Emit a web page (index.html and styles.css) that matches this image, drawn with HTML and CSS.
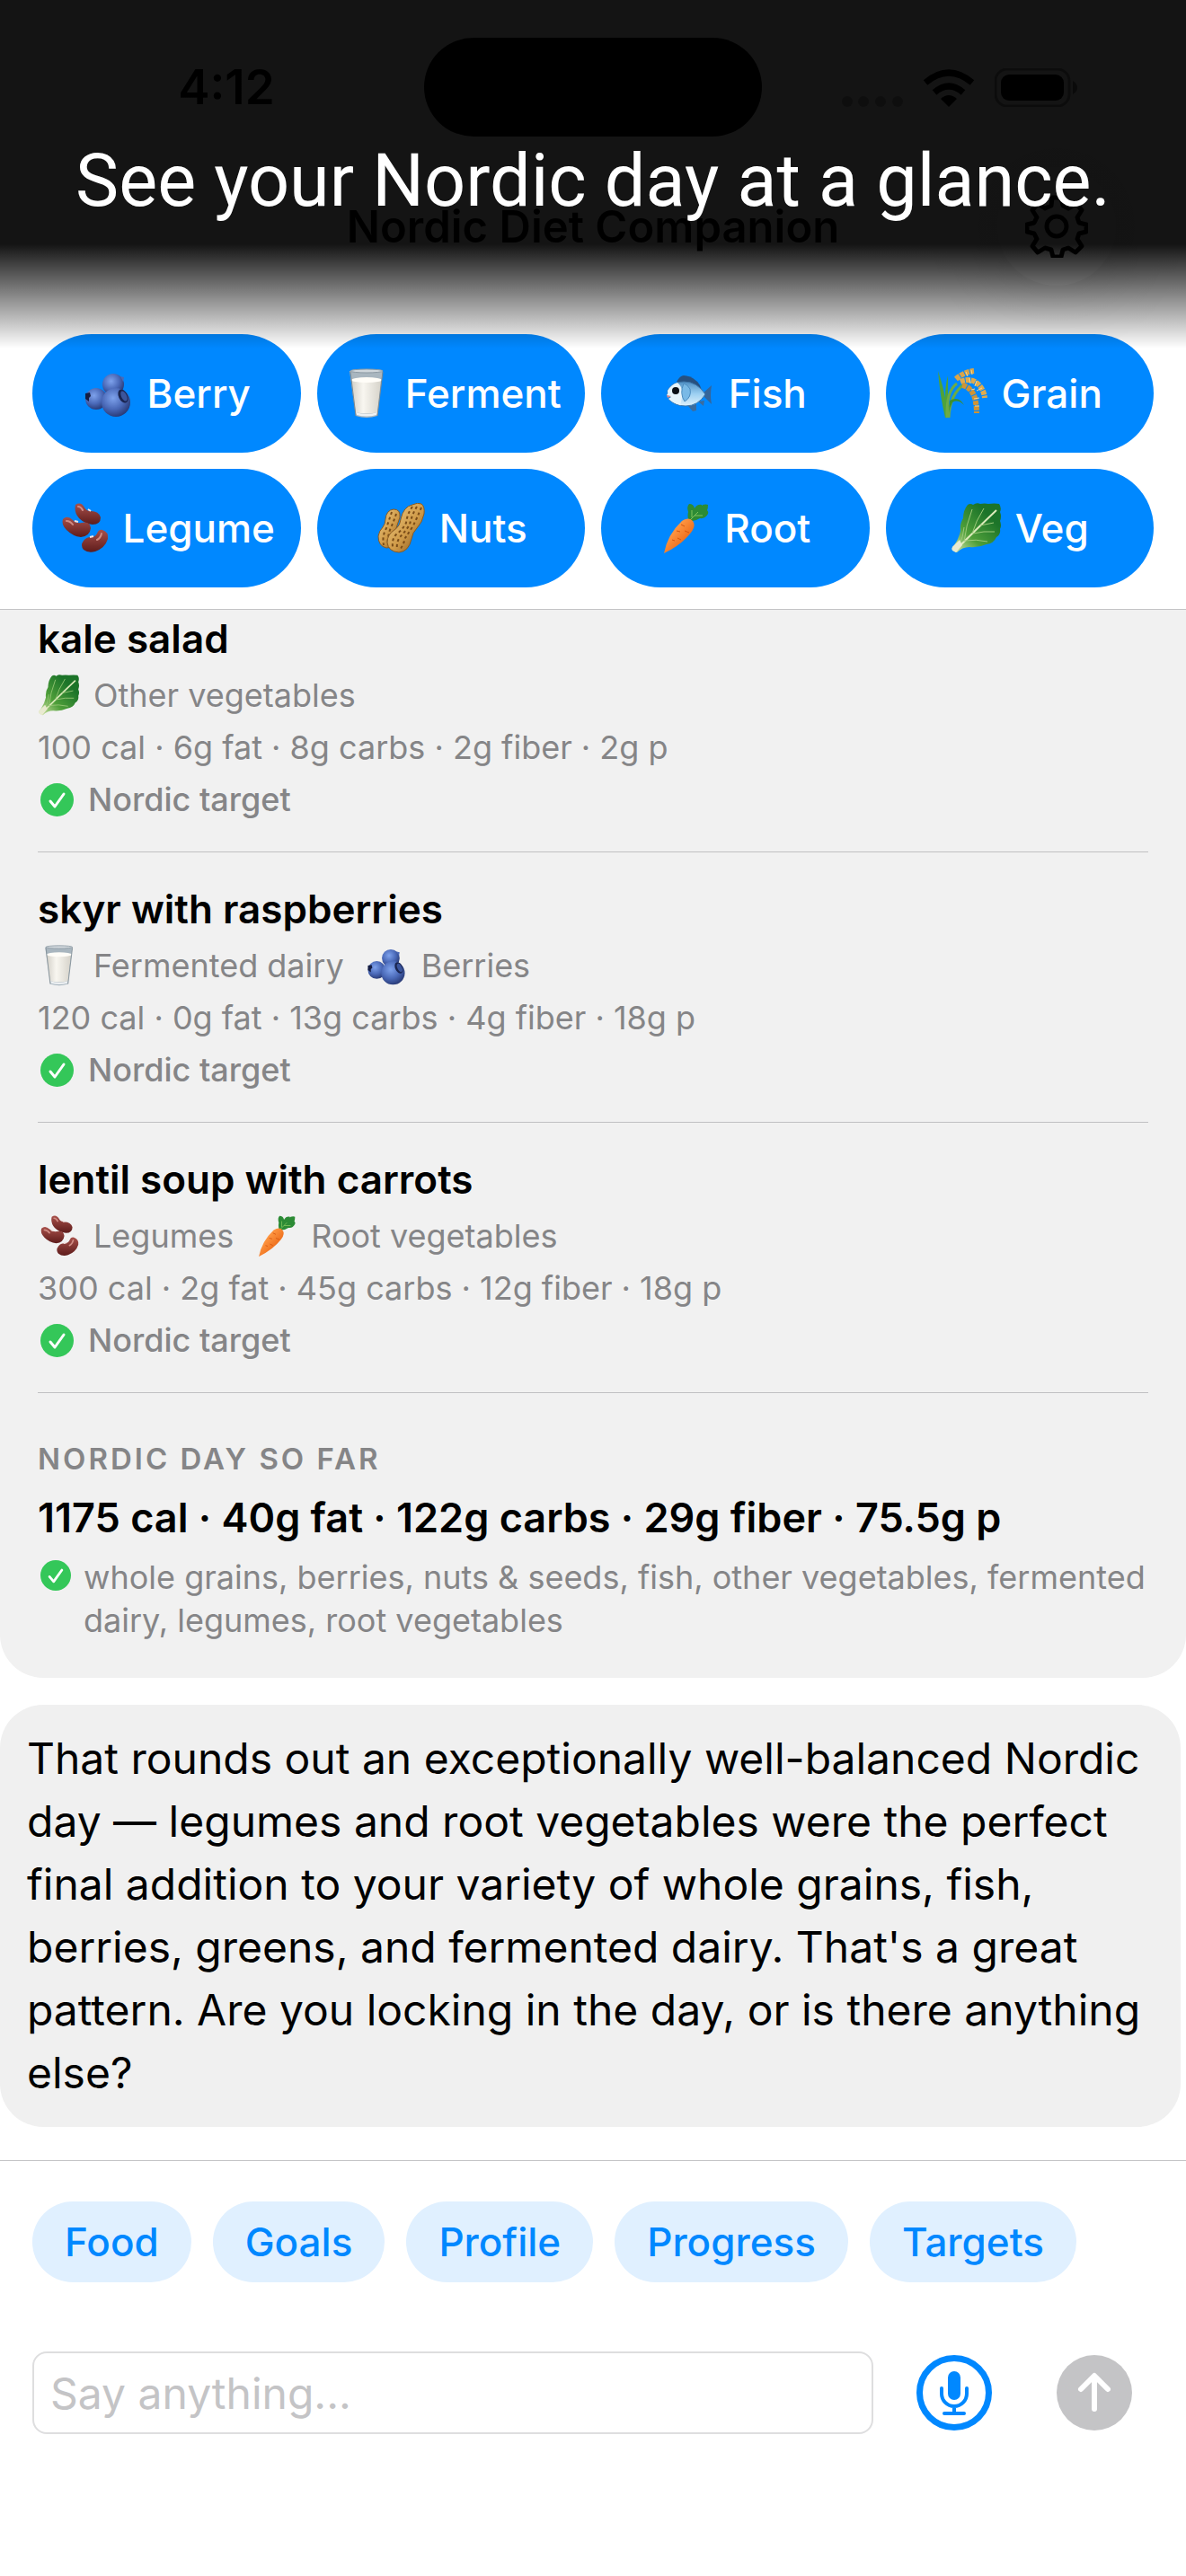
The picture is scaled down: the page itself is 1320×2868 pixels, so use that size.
FILE: index.html
```html
<!DOCTYPE html>
<html lang="en">
<head>
  <meta charset="UTF-8">
  <meta name="viewport" content="width=device-width, initial-scale=1.0">
  <title>Nordic Diet Companion</title>
  <link rel="stylesheet" href="styles.css">
</head>
<body>
  <!-- Shared icons -->
  <svg class="sprite" aria-hidden="true">
    <defs>
      <radialGradient id="berry-fill" cx="0.4" cy="0.35" r="0.7">
        <stop offset="0" stop-color="#7ea2ec"/>
        <stop offset="0.55" stop-color="#4a69b8"/>
        <stop offset="1" stop-color="#25356f"/>
      </radialGradient>
      <linearGradient id="milk-fill" x1="0" x2="1" y1="0" y2="0">
        <stop offset="0" stop-color="#d3d0c8"/>
        <stop offset="0.4" stop-color="#f8f6f0"/>
        <stop offset="1" stop-color="#d6d3ca"/>
      </linearGradient>
      <linearGradient id="bean-fill" x1="0" x2="0" y1="0" y2="1">
        <stop offset="0" stop-color="#a8504a"/>
        <stop offset="1" stop-color="#5e1c1b"/>
      </linearGradient>
      <linearGradient id="nut-fill" x1="0" x2="1" y1="0" y2="1">
        <stop offset="0" stop-color="#f0cf8a"/>
        <stop offset="0.55" stop-color="#cf9a48"/>
        <stop offset="1" stop-color="#7d4f1a"/>
      </linearGradient>
      <linearGradient id="carrot-fill" x1="0" x2="1" y1="0" y2="1">
        <stop offset="0.3" stop-color="#ff9a45"/>
        <stop offset="0.8" stop-color="#e8600f"/>
      </linearGradient>
      <linearGradient id="leaf-fill" x1="0" x2="1" y1="1" y2="0">
        <stop offset="0.05" stop-color="#c9dfa0"/>
        <stop offset="0.35" stop-color="#4f9f3a"/>
        <stop offset="0.75" stop-color="#1c7429"/>
      </linearGradient>
      <linearGradient id="fish-fill" x1="0" x2="0" y1="0" y2="1">
        <stop offset="0" stop-color="#4f8fc4"/>
        <stop offset="0.5" stop-color="#9cd0f2"/>
        <stop offset="1" stop-color="#dff1fb"/>
      </linearGradient>

      <symbol id="berry" viewBox="0 0 56 56">
        <circle cx="34" cy="18" r="12" fill="url(#berry-fill)"/>
        <path d="M42 9l4 1-1 5z" fill="#4a69b8"/>
        <circle cx="15" cy="34" r="12" fill="url(#berry-fill)"/>
        <path d="M3 28l5-1 1 4-2 2 0 4-4-3z" fill="#141c42"/>
        <circle cx="37" cy="38" r="16" fill="url(#berry-fill)"/>
        <ellipse cx="45" cy="31" rx="5" ry="8" transform="rotate(-25 45 31)" fill="#1a2550"/>
        <ellipse cx="46" cy="31" rx="3" ry="6" transform="rotate(-25 46 31)" fill="#3b559c"/>
      </symbol>

      <symbol id="milk" viewBox="0 0 56 56">
        <path d="M10 3h37l-6 50q-12 4-24 0z" fill="#a9b6bf"/>
        <path d="M12 13h33l-4 36q-12 3-24 0z" fill="url(#milk-fill)"/>
        <ellipse cx="29" cy="13" rx="17" ry="3" fill="#fffdf8"/>
        <path d="M17 49q12 4 24 0l-1 3q-11 3-22 0z" fill="#eef1f3"/>
        <ellipse cx="29" cy="3" rx="18" ry="2" fill="#cfd6db" stroke="#8c9aa4"/>
        <path d="M11 4l6 49M47 4l-6 49" stroke="#7d8a92" fill="none"/>
      </symbol>

      <symbol id="fish" viewBox="0 0 56 56">
        <path d="M14 15Q18 8 22 8q12 1 18 11l3 9z" fill="#27507f"/>
        <path d="M42 29l11-10q-2 11 0 21z" fill="#35659a"/>
        <path d="M27 42l5 6 4-1 0-7zM38 37l6 5 1-6z" fill="#3b6c9e"/>
        <path d="M3 30q2-2 1-5 5-10 18-10 15 0 24 14-8 13-22 13-12 0-19-8l3-2z" fill="url(#fish-fill)" stroke="#3f78aa"/>
        <path d="M4 25q4-7 11-9 9 7 3 25-8-2-13-7l3-2-5-2q2-2 1-5z" fill="#e5f3fb"/>
        <path d="M22 17q-5 11 1 20 8-5 6-14-3-5-7-6z" fill="#79b9e6" stroke="#4b8cc0"/>
        <circle cx="13" cy="25" r="4" fill="#0b0f16"/>
        <path d="M3 30l5 1-4 2z" fill="#d88"/>
      </symbol>

      <symbol id="grain" viewBox="0 0 56 56">
        <path d="M9 55Q3 30 1 3q6 18 8 30 0-14 3-25 0 16 0 26l2 21z" fill="#4ea23a"/>
        <path d="M11 55q-1-30 11-38M13 55q1-26 17-37" fill="none" stroke="#6cab45" stroke-width="3"/>
        <path d="M14 36q10-6 16 5-7-7-13-3-3 5-4 12z" fill="#3c8f32"/>
        <path d="M21 12q9-8 20-9" fill="none" stroke="#d9a548" stroke-width="6" stroke-dasharray="5 1"/>
        <path d="M26 15q12-5 20 3 6 6 7 15" fill="none" stroke="#e0ab4c" stroke-width="6" stroke-dasharray="5 1"/>
        <path d="M28 19q10 2 14 14 2 8 2 17" fill="none" stroke="#cf9436" stroke-width="6" stroke-dasharray="5 1"/>
        <path d="M32 4l2 5M38 2l1 5M36 11l1 6M44 14l-2 6M50 22l-6 3M38 24l4-1M41 34l6-1M42 42l5 0" stroke="#f6d692" fill="none"/>
      </symbol>

      <symbol id="bean" viewBox="0 0 56 56">
        <path d="M19 2q6-4 10 3 2 4 7 4 9 0 11 7 0 8-9 8-9-1-15-7-6-7-4-15z" fill="url(#bean-fill)"/>
        <path d="M5 18q5-5 11 1 4 4 10 3 9-2 10 6-1 9-11 10-9-1-16-8-6-6-4-12z" fill="url(#bean-fill)"/>
        <path d="M49 30q7 2 6 10-3 10-14 14-8 2-13-2-4-5 0-10 3-4 8-4 5 0 7-4 2-5 6-4z" fill="url(#bean-fill)"/>
        <path d="M22 4q3 0 5 4M9 20q4 0 7 4M48 34q-1 5-5 7" fill="none" stroke="#d08c84" stroke-width="2" stroke-linecap="round"/>
        <path d="M33 7l3 2M18 20l4 1M35 38l4-1" stroke="#f3e3df" stroke-width="2"/>
      </symbol>

      <symbol id="nuts" viewBox="0 0 56 56">
        <path d="M21 7q8 0 7 9-2 6-4 12-2 6-1 13-1 9-10 9-9-2-9-13 1-6 5-10 3-4 3-9 1-10 9-11z" fill="url(#nut-fill)" stroke="#8a5a20"/>
        <path d="M19 10q-3 9-6 18-5 9-3 19M24 12q-3 9-7 18-3 9-2 17" fill="none" stroke="#7a4c18" stroke-width="2" stroke-dasharray="3 3"/>
        <path d="M52 1q4 3 3 11-2 10-8 16-5 5-6 12-3 14-14 15-12-1-13-11 0-9 8-14 6-4 7-12 3-14 13-16 6-3 10-1z" fill="url(#nut-fill)" stroke="#8a5a20"/>
        <path d="M42 4q-6 9-7 18-4 8-11 13-5 5-4 14M47 4q-6 10-8 20-5 8-11 14-4 6-3 14M52 5q-5 12-9 20-5 8-9 14-2 8-6 13" fill="none" stroke="#7a4c18" stroke-width="2" stroke-dasharray="3 3"/>
      </symbol>

      <symbol id="carrot" viewBox="0 0 56 56">
        <path d="M32 19q-1-6 0-9-2-6 1-9 5 0 6 5 3-5 8-4 0 2 1 0 4-1 6 0 0 4-1 6 2 2 1 4-3 6-9 5-6 4-12 3z" fill="#2c8b35"/>
        <path d="M34 19l9-9M36 16l0-8M39 14l9 0" stroke="#7fc35c" fill="none"/>
        <path d="M25 20q8-5 12 0 4 5-2 13Q24 47 5 56q4-21 20-36z" fill="url(#carrot-fill)"/>
        <path d="M24 24l4 2M19 31l4 1M33 33l-5-2M24 41l-4-2M14 41l3 1" stroke="#d5550e" fill="none"/>
      </symbol>

      <symbol id="leaf" viewBox="0 0 56 56">
        <path d="M3 53q-3-3 1-6 5-7 7-16-1-8 3-14 0-9 5-15 3-2 6 0 4-3 8-1 5-1 9 0 7-1 12 0 3 4 1 9 2 5 0 10 2 5 0 9 1 6-4 9-3 7-11 8-9 4-19 3-8 0-14 6-2 0-4-2z" fill="url(#leaf-fill)"/>
        <path d="M5 53Q30 28 51 8" fill="none" stroke="#dcebbb" stroke-width="2"/>
        <path d="M15 43q2-18 9-36M24 34q4-14 13-28M33 25l15-3M25 34q12-3 24-2M16 42q12-2 25 1M10 46q4-8 5-19" fill="none" stroke="#9cc97a"/>
        <path d="M2 53q-2-3 2-6l6-6 3 6-7 8z" fill="#e9ead0"/>
      </symbol>

      <symbol id="check" viewBox="0 0 37 37">
        <circle cx="18.500" cy="18.500" r="18.500" fill="#34c759"/>
        <path d="M11 20l5 6 10-14" fill="none" stroke="#fff" stroke-width="3" stroke-linecap="round" stroke-linejoin="round"/>
      </symbol>
    </defs>
  </svg>

  <header class="top">
    <div class="status-bar">
      <span class="time">4:12</span>
      <span class="island"></span>
      <span class="status-icons">
        <svg width="68" height="12" viewBox="0 0 68 12">
          <g opacity="0.3">
            <circle cx="6" cy="6" r="6"/>
            <circle cx="24" cy="6" r="6"/>
            <circle cx="43" cy="6" r="6"/>
            <circle cx="62" cy="6" r="6"/>
          </g>
        </svg>
        <svg class="wifi" width="58" height="42" viewBox="0 0 58 42">
          <path d="M29 42l-9-9q9-8 18 0z"/>
          <path d="M13 26q16-14 32 0M3 15q26-22 52 0" fill="none" stroke="#000" stroke-width="7"/>
        </svg>
        <svg width="92" height="43" viewBox="0 0 92 43">
          <rect x="1" y="1" width="82" height="41" rx="13" fill="none" stroke="#000" stroke-opacity="0.4" stroke-width="3"/>
          <rect x="7" y="7" width="70" height="29" rx="9"/>
          <path d="M87 14q5 3 5 7.500t-5 7.500z" fill-opacity="0.5"/>
        </svg>
      </span>
    </div>

    <div class="nav-bar">
      <h1>Nordic Diet Companion</h1>
      <button class="settings" aria-label="Settings">
        <svg width="70" height="70" viewBox="0 0 70 70" fill="none" stroke="#000" stroke-width="5" stroke-linejoin="round">
          <path d="M30 3h10l2 9 6 3 9-5 6 7-5 8 2 6 8 2v8l-8 2-2 6 5 8-7 7-8-5-6 2-2 8h-9l-2-8-7-2-8 5-6-7 5-8-3-6-8-2v-8l8-2 3-6-5-8 6-7 8 5 7-3z"/>
          <circle cx="35" cy="35" r="11"/>
        </svg>
      </button>
    </div>

    <!-- Caption drawn over the top of the app -->
    <div class="caption">
      <p>See your Nordic day at a glance.</p>
    </div>

    <div class="quick-log">
      <button><svg class="emoji"><use href="#berry"/></svg>Berry</button>
      <button><svg class="emoji"><use href="#milk"/></svg>Ferment</button>
      <button><svg class="emoji"><use href="#fish"/></svg>Fish</button>
      <button><svg class="emoji"><use href="#grain"/></svg>Grain</button>
      <button><svg class="emoji"><use href="#bean"/></svg>Legume</button>
      <button><svg class="emoji"><use href="#nuts"/></svg>Nuts</button>
      <button><svg class="emoji"><use href="#carrot"/></svg>Root</button>
      <button><svg class="emoji"><use href="#leaf"/></svg>Veg</button>
    </div>
  </header>

  <main class="chat">
    <section class="day-log">
      <article class="entry">
        <h2>kale salad</h2>
        <p class="tags">
          <span class="tag"><svg class="emoji"><use href="#leaf"/></svg>Other vegetables</span>
        </p>
        <p>100 cal · 6g fat · 8g carbs · 2g fiber · 2g p</p>
        <p class="target"><svg class="check"><use href="#check"/></svg>Nordic target</p>
      </article>

      <article class="entry">
        <h2>skyr with raspberries</h2>
        <p class="tags">
          <span class="tag"><svg class="emoji"><use href="#milk"/></svg>Fermented dairy</span>
          <span class="tag"><svg class="emoji"><use href="#berry"/></svg>Berries</span>
        </p>
        <p>120 cal · 0g fat · 13g carbs · 4g fiber · 18g p</p>
        <p class="target"><svg class="check"><use href="#check"/></svg>Nordic target</p>
      </article>

      <article class="entry">
        <h2>lentil soup with carrots</h2>
        <p class="tags">
          <span class="tag"><svg class="emoji"><use href="#bean"/></svg>Legumes</span>
          <span class="tag"><svg class="emoji"><use href="#carrot"/></svg>Root vegetables</span>
        </p>
        <p>300 cal · 2g fat · 45g carbs · 12g fiber · 18g p</p>
        <p class="target"><svg class="check"><use href="#check"/></svg>Nordic target</p>
      </article>

      <div class="summary">
        <h3>NORDIC DAY SO FAR</h3>
        <p class="totals">1175 cal · 40g fat · 122g carbs · 29g fiber · 75.5g p</p>
        <div class="covered">
          <svg class="check"><use href="#check"/></svg>
          <p>whole grains, berries, nuts &amp; seeds, fish, other vegetables, fermented dairy, legumes, root vegetables</p>
        </div>
      </div>
    </section>

    <p class="message">That rounds out an exceptionally well-balanced Nordic day — legumes and root vegetables were the perfect final addition to your variety of whole grains, fish, berries, greens, and fermented dairy. That's a great pattern. Are you locking in the day, or is there anything else?</p>
  </main>

  <footer class="composer">
    <div class="chips">
      <button>Food</button>
      <button>Goals</button>
      <button>Profile</button>
      <button>Progress</button>
      <button>Targets</button>
    </div>

    <form class="input-row">
      <input type="text" placeholder="Say anything..." aria-label="Message">
      <button type="button" class="icon-btn" aria-label="Dictate">
        <svg width="84" height="84" viewBox="0 0 84 84" fill="none" stroke="#0088ff" stroke-linecap="round">
          <circle cx="42" cy="42" r="38.500" stroke-width="7"/>
          <rect x="35" y="18" width="14" height="32" rx="7" fill="#0088ff" stroke="none"/>
          <path d="M28 37v6a14 14 0 0 0 28 0v-6M42 57v8M31 65h22" stroke-width="4"/>
        </svg>
      </button>
      <button type="button" class="icon-btn send" aria-label="Send">
        <svg width="84" height="84" viewBox="0 0 84 84" fill="none" stroke="#fff" stroke-width="6" stroke-linecap="round" stroke-linejoin="round">
          <circle cx="42" cy="42" r="42" fill="#c4c4c6" stroke="none"/>
          <path d="M42 60V24M27 38l15-15 15 15"/>
        </svg>
      </button>
    </form>
  </footer>
</body>
</html>
```
FILE: styles.css
```css
* {
  box-sizing: border-box;
}
body {
  font-family: Inter, "Liberation Sans", sans-serif;
  margin: 0;
  background: #fff;
  color: #000;
}
h1, h2, h3, p {
  margin: 0;
}
button {
  font: inherit;
  border: none;
  padding: 0;
  background: none;
  cursor: pointer;
}
svg {
  display: block;
  flex: none;
}
.sprite {
  position: absolute;
  width: 0;
  height: 0;
}

/* Header */
.top {
  position: relative;
  padding-top: 42px;
  border-bottom: 1px solid #c4c4c6;
}
.status-bar {
  display: grid;
  grid-template-columns: 1fr 376px 1fr;
  align-items: center;
  justify-items: center;
  padding: 0 32px;
}
.time {
  font-size: 53px;
  font-weight: 600;
}
.island {
  width: 100%;
  height: 110px;
  border-radius: 55px;
  background: #000;
}
.status-icons {
  display: flex;
  align-items: flex-end;
  gap: 22px;
}
.nav-bar {
  display: grid;
  grid-template-columns: 132px 1fr 132px;
  align-items: center;
  margin-top: 34px;
  padding: 0 78px;
}
.nav-bar h1 {
  grid-column: 2;
  font-size: 49px;
  font-weight: 600;
  text-align: center;
}
.settings {
  display: flex;
  align-items: center;
  justify-content: center;
  width: 132px;
  height: 132px;
  border-radius: 50%;
  box-shadow: 0 0 96px rgba(0, 0, 0, 0.12);
}
.caption {
  position: absolute;
  top: 0;
  left: 0;
  right: 0;
  height: 388px;
  padding-top: 152px;
  background: linear-gradient(rgba(0, 0, 0, 0.92) 272px, rgba(0, 0, 0, 0));
  color: #fff;
  font-family: Roboto, Inter, sans-serif;
  font-size: 81px;
  line-height: 100px;
  text-align: center;
  white-space: nowrap;
  pointer-events: none;
}
.quick-log {
  display: grid;
  grid-template-columns: repeat(4, 1fr);
  gap: 18px;
  padding: 54px 36px 24px;
}
.quick-log button {
  display: flex;
  align-items: center;
  justify-content: center;
  gap: 16px;
  height: 132px;
  border-radius: 66px;
  background: #0088ff;
  color: #fff;
  font-size: 44px;
  font-weight: 500;
}
.quick-log .emoji {
  width: 56px;
  height: 56px;
}

/* Chat */
.chat {
  padding-bottom: 37px;
}
.day-log {
  padding: 2px 42px 40px;
  border-radius: 0 0 48px 48px;
  background: #f1f1f1;
  color: #858587;
  font-size: 36px;
  line-height: 58px;
}
.entry {
  padding: 33px 0 29px;
  border-bottom: 1px solid #c0c0c2;
}
.entry:first-child {
  padding-top: 0;
}
.entry h2 {
  margin-bottom: 4px;
  color: #000;
  font-size: 44px;
  font-weight: 600;
  line-height: 60px;
}
.tags {
  display: flex;
  gap: 24px;
}
.tag {
  display: flex;
  align-items: center;
  gap: 16px;
}
.tag .emoji {
  width: 46px;
  height: 46px;
}
.target {
  display: flex;
  align-items: center;
  gap: 16px;
  padding-left: 3px;
  font-weight: 500;
}
.check {
  width: 37px;
  height: 37px;
}
.summary {
  padding-top: 49px;
}
.summary h3 {
  font-size: 33px;
  font-weight: 600;
  line-height: 48px;
  letter-spacing: 3px;
}
.totals {
  margin: 12px 0;
  color: #000;
  font-size: 45px;
  font-weight: 600;
  line-height: 60px;
}
.covered {
  display: flex;
  gap: 14px;
  padding-left: 3px;
  line-height: 48px;
}
.covered .check {
  width: 34px;
  height: 34px;
  margin-top: 5px;
}
.message {
  margin: 30px 6px 0 0;
  padding: 25px 30px;
  border-radius: 48px;
  background: #f0f0f0;
  font-size: 48px;
  line-height: 70px;
}

/* Composer */
.composer {
  padding: 45px 60px 158px 36px;
  border-top: 1px solid #c4c4c6;
}
.chips {
  display: flex;
  gap: 24px;
}
.chips button {
  height: 90px;
  padding: 0 36px;
  border-radius: 45px;
  background: #e0f0ff;
  color: #0088ff;
  font-size: 44px;
  font-weight: 500;
}
.input-row {
  display: flex;
  align-items: center;
  margin-top: 77px;
}
.input-row input {
  flex: 1;
  min-width: 0;
  height: 92px;
  padding: 0 18px;
  border: 2px solid #dededf;
  border-radius: 16px;
  font: inherit;
  font-size: 48px;
}
.input-row input::placeholder {
  color: #c4c4c6;
  opacity: 1;
}
.icon-btn {
  margin-left: 48px;
}
.send {
  margin-left: 72px;
}
```
